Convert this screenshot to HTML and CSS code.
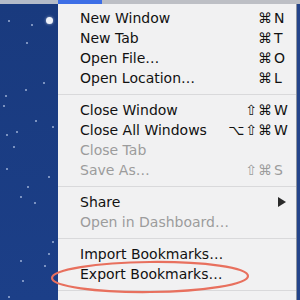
FILE: index.html
```
<!DOCTYPE html>
<html>
<head>
<meta charset="utf-8">
<link rel="stylesheet" href="styles.css">
</head>
<body>
<div class="screen">
  <div class="menubar">
    <div class="mb-left"></div>
    <div class="mb-active"></div>
    <div class="mb-right"></div>
  </div>
  <div class="main">
    <div class="desktop">
      <span class="star big" style="left:46px;top:13px"></span>
      <span class="star" style="left:8px;top:16px"></span>
      <span class="star" style="left:31px;top:20px"></span>
      <span class="star" style="left:26px;top:38px"></span>
      <span class="star" style="left:43px;top:78px"></span>
      <span class="star" style="left:25px;top:85px"></span>
      <span class="star" style="left:5px;top:91px"></span>
      <span class="star" style="left:3px;top:101px"></span>
      <span class="star" style="left:35px;top:116px"></span>
      <span class="star" style="left:52px;top:122px"></span>
      <span class="star" style="left:16px;top:127px"></span>
      <span class="star" style="left:6px;top:130px"></span>
      <span class="star" style="left:13px;top:142px"></span>
      <span class="star" style="left:6px;top:164px"></span>
      <span class="star" style="left:48px;top:172px"></span>
      <span class="star" style="left:27px;top:182px"></span>
      <span class="star" style="left:20px;top:192px"></span>
      <span class="star" style="left:34px;top:198px"></span>
      <span class="star" style="left:52px;top:237px"></span>
      <span class="star" style="left:48px;top:249px"></span>
      <span class="star" style="left:20px;top:256px"></span>
      <span class="star" style="left:44px;top:261px"></span>
      <span class="star" style="left:22px;top:276px"></span>
      <span class="star" style="left:8px;top:292px"></span>
    </div>
    <div class="menu">
      <div class="item"><span class="label">New Window</span><span class="mods">⌘</span><span class="key">N</span></div>
      <div class="item"><span class="label">New Tab</span><span class="mods">⌘</span><span class="key">T</span></div>
      <div class="item"><span class="label">Open File…</span><span class="mods">⌘</span><span class="key">O</span></div>
      <div class="item"><span class="label">Open Location…</span><span class="mods">⌘</span><span class="key">L</span></div>
      <div class="sep"></div>
      <div class="item"><span class="label">Close Window</span><span class="mods">⇧⌘</span><span class="key">W</span></div>
      <div class="item"><span class="label">Close All Windows</span><span class="mods">⌥⇧⌘</span><span class="key">W</span></div>
      <div class="item disabled"><span class="label">Close Tab</span></div>
      <div class="item disabled"><span class="label">Save As…</span><span class="mods">⇧⌘</span><span class="key">S</span></div>
      <div class="sep"></div>
      <div class="item"><span class="label">Share</span><span class="key"><svg class="arrow" width="8" height="10" viewBox="0 0 8 10"><path d="M0 0 L8 5 L0 10 Z" fill="#2a2a2a"/></svg></span></div>
      <div class="item disabled"><span class="label">Open in Dashboard…</span></div>
      <div class="sep"></div>
      <div class="item"><span class="label">Import Bookmarks…</span></div>
      <div class="item"><span class="label">Export Bookmarks…</span></div>
      <div class="sep"></div>
      <div class="item"><span class="label">Print…</span><span class="mods">⌘</span><span class="key">P</span></div>
    </div>
    <div class="edge"></div>
  </div>
  <svg class="circle" width="300" height="300" viewBox="0 0 300 300">
    <ellipse cx="150" cy="277" rx="98" ry="15" fill="none" stroke="#e8705e" stroke-width="2.2" transform="rotate(-0.6 150 277)"/>
  </svg>
</div>
</body>
</html>
```
FILE: styles.css
```
html, body {
  margin: 0;
  padding: 0;
  background: #1b3c82;
}
.screen {
  position: relative;
  width: 300px;
  height: 300px;
  overflow: hidden;
  display: flex;
  flex-direction: column;
  font-family: "DejaVu Sans", "Liberation Sans", sans-serif;
}
.menubar {
  display: flex;
  height: 4px;
  flex: none;
}
.mb-left {
  width: 58px;
  background: #b3bbc9;
}
.mb-active {
  width: 44px;
  background: #3d6ee6;
}
.mb-right {
  flex: 1;
  background: #bdbfc5;
}
.main {
  display: flex;
  flex: 1;
  min-height: 0;
}
.desktop {
  position: relative;
  width: 58px;
  flex: none;
  background: linear-gradient(180deg, #193a7e 0%, #1c3f88 100%);
}
.star {
  position: absolute;
  width: 2px;
  height: 2px;
  border-radius: 50%;
  background: rgba(200, 215, 240, 0.75);
}
.star.big {
  width: 7px;
  height: 7px;
  background: #eef2fa;
  box-shadow: 0 0 3px rgba(255, 255, 255, 0.6);
}
.menu {
  width: 238px;
  flex: none;
  background: #f1f1f2;
  border-right: 1px solid #8d939e;
  padding-top: 4px;
  display: flex;
  flex-direction: column;
}
.item {
  display: flex;
  align-items: center;
  height: 20px;
  line-height: 20px;
  padding: 0 8px 0 22px;
  font-size: 14px;
  color: #111;
  flex: none;
}
.item.disabled {
  color: #9c9c9c;
}
.label {
  flex: 1;
  white-space: nowrap;
}
.mods {
  text-align: right;
  letter-spacing: 1px;
  margin-right: 1px;
}
.key {
  width: 14px;
  display: flex;
  align-items: center;
}
.arrow {
  margin-left: 4px;
}
.sep {
  flex: none;
  height: 1px;
  margin: 6px 0 5px;
  background: #d9d9db;
}
.edge {
  flex: 1;
  background: #24448a;
}
.circle {
  position: absolute;
  left: 0;
  top: 0;
  pointer-events: none;
}
```
